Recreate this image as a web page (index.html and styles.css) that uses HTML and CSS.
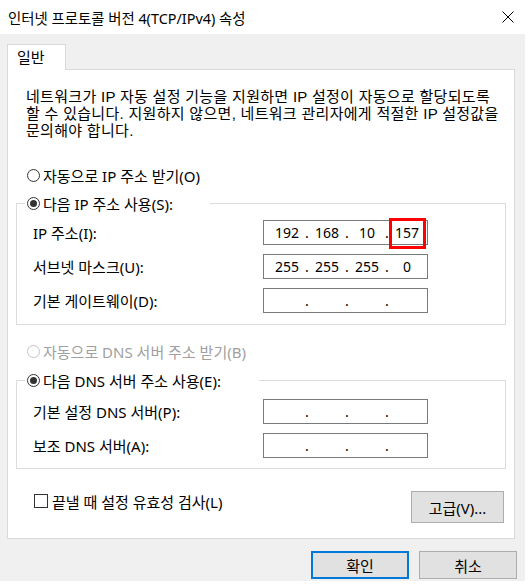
FILE: index.html
```html
<!DOCTYPE html>
<html lang="ko">
<head>
<meta charset="utf-8">
<title>인터넷 프로토콜 버전 4(TCP/IPv4) 속성</title>
<link rel="stylesheet" href="styles.css">
</head>
<body>
<div class="window">
  <div class="titlebar">
    <span class="title">인터넷 프로토콜 버전 4(TCP/IPv4) 속성</span>
    <svg class="close" width="12" height="12" viewBox="0 0 12 12"><path d="M0.5 0.5 L11.5 11.5 M11.5 0.5 L0.5 11.5" stroke="#000" stroke-width="1" fill="none"/></svg>
  </div>
  <div class="body">
    <div class="tabs"><div class="tab">일반</div></div>
    <div class="panel">
      <div class="desc">
        <div class="line">네트워크가 IP 자동 설정 기능을 지원하면 IP 설정이 자동으로 할당되도록</div>
        <div class="line">할 수 있습니다. 지원하지 않으면, 네트워크 관리자에게 적절한 IP 설정값을</div>
        <div class="line">문의해야 합니다.</div>
      </div>

      <div class="radio-row first"><span class="radio"></span><span>자동으로 IP 주소 받기(O)</span></div>

      <fieldset class="group">
        <legend class="legend ip-legend"><span class="radio checked"></span><span>다음 IP 주소 사용(S):</span></legend>
        <div class="rows ip-rows">
          <div class="field-row">
            <span>IP 주소(I):</span>
            <div class="ipbox"><span class="oct">192</span><span class="dot">.</span><span class="oct">168</span><span class="dot">.</span><span class="oct">10</span><span class="dot">.</span><span class="oct">157</span><span class="mark"></span></div>
          </div>
          <div class="field-row">
            <span>서브넷 마스크(U):</span>
            <div class="ipbox"><span class="oct">255</span><span class="dot">.</span><span class="oct">255</span><span class="dot">.</span><span class="oct">255</span><span class="dot">.</span><span class="oct">0</span></div>
          </div>
          <div class="field-row">
            <span>기본 게이트웨이(D):</span>
            <div class="ipbox"><span class="oct"></span><span class="dot">.</span><span class="oct"></span><span class="dot">.</span><span class="oct"></span><span class="dot">.</span><span class="oct"></span></div>
          </div>
        </div>
      </fieldset>

      <div class="radio-row disabled-row"><span class="radio disabled"></span><span>자동으로 DNS 서버 주소 받기(B)</span></div>

      <fieldset class="group dns-group">
        <legend class="legend dns-legend"><span class="radio checked"></span><span>다음 DNS 서버 주소 사용(E):</span></legend>
        <div class="rows dns-rows">
          <div class="field-row">
            <span>기본 설정 DNS 서버(P):</span>
            <div class="ipbox"><span class="oct"></span><span class="dot">.</span><span class="oct"></span><span class="dot">.</span><span class="oct"></span><span class="dot">.</span><span class="oct"></span></div>
          </div>
          <div class="field-row">
            <span>보조 DNS 서버(A):</span>
            <div class="ipbox"><span class="oct"></span><span class="dot">.</span><span class="oct"></span><span class="dot">.</span><span class="oct"></span><span class="dot">.</span><span class="oct"></span></div>
          </div>
        </div>
      </fieldset>

      <div class="bottom-row">
        <div class="check-row"><span class="checkbox"></span><span>끝낼 때 설정 유효성 검사(L)</span></div>
        <div class="btn adv">고급(V)...</div>
      </div>
    </div>
    <div class="actions">
      <div class="btn ok">확인</div>
      <div class="btn">취소</div>
    </div>
  </div>
</div>
</body>
</html>
```

FILE: styles.css
```css
* { box-sizing: border-box; }
html, body { margin: 0; padding: 0; background: #fff; }
body {
  font-family: "Noto Sans", "Noto Sans CJK KR", sans-serif;
  font-size: 15px;
  color: #000;
}
.window {
  width: 525px;
  height: 581px;
  background: #f0f0f0;
  display: flex;
  flex-direction: column;
}
.titlebar {
  height: 34px;
  background: #fff;
  display: flex;
  align-items: center;
  justify-content: space-between;
  padding-left: 8px;
  font-size: 14.4px;
}
.close { margin-right: 11px; display: block; }
.body {
  padding: 10px 8px 0 7px;
  display: flex;
  flex-direction: column;
}
.tabs { display: flex; height: 26px; margin-bottom: -1px; }
.tab {
  position: relative;
  z-index: 1;
  width: 59px;
  height: 26px;
  border: 1px solid #d9d9d9;
  border-bottom: none;
  background: #fff;
  padding-left: 9px;
  line-height: 25px;
}
.panel {
  width: 508px;
  height: 470px;
  background: #fff;
  border: 1px solid #d9d9d9;
  display: flex;
  flex-direction: column;
}
.desc {
  margin: 18px 0 0 18px;
  font-family: "Liberation Sans", "Noto Sans CJK KR", sans-serif;
  letter-spacing: 0.3px;
  white-space: nowrap;
}
.line { height: 17px; line-height: 17px; }
.radio-row {
  display: flex;
  align-items: center;
  height: 20px;
  margin-left: 19px;
  gap: 3px;
}
.radio-row.first { margin-top: 26px; }
.radio {
  width: 13px;
  height: 13px;
  border: 1px solid #333;
  border-radius: 50%;
  background: #fff;
  display: flex;
  align-items: center;
  justify-content: center;
  flex: none;
}
.radio.checked::after {
  content: "";
  width: 7px;
  height: 7px;
  border-radius: 50%;
  background: #333;
}
.radio.disabled { border-color: #c4c4c4; }
.disabled-row { color: #a0a0a0; margin-top: 16px; }
.group {
  margin: 8px 8px 0 8px;
  border: 1px solid #dcdcdc;
  padding: 0;
  min-width: 0;
}
.dns-group { margin-top: 9px; }
.legend {
  display: flex;
  align-items: center;
  gap: 3px;
  height: 20px;
  margin-left: 8px;
  padding: 0 2px;
  background: #fff;
}
.ip-legend { width: 185px; }
.dns-legend { width: 234px; }
.rows {
  display: flex;
  flex-direction: column;
  gap: 9px;
  padding: 7px 0 11px 16px;
}
.dns-rows { padding: 9px 0 10px 16px; }
.field-row {
  display: grid;
  grid-template-columns: 230px 165px;
  align-items: center;
  height: 25px;
}
.ipbox {
  position: relative;
  width: 165px;
  height: 25px;
  border: 1px solid #7a7a7a;
  background: #fff;
  display: flex;
  align-items: center;
  padding-left: 7px;
  font-size: 14px;
}
.oct { width: 32px; text-align: center; }
.dot { width: 8px; text-align: center; }
.mark {
  position: absolute;
  left: 125px;
  top: -3px;
  width: 37px;
  height: 31px;
  border: 3px solid #f00;
}
.bottom-row {
  display: flex;
  justify-content: space-between;
  align-items: flex-start;
  margin: 22px 10px 0 26px;
}
.check-row {
  display: flex;
  align-items: center;
  height: 20px;
  gap: 4px;
}
.checkbox {
  width: 14px;
  height: 14px;
  border: 1px solid #333;
  background: #fff;
  flex: none;
}
.btn {
  height: 28px;
  width: 98px;
  background: #e1e1e1;
  border: 1px solid #adadad;
  display: flex;
  align-items: center;
  justify-content: center;
}
.btn.adv { width: 93px; height: 32px; }
.btn.ok { border: 2px solid #0078d7; }
.actions {
  display: flex;
  justify-content: flex-end;
  gap: 10px;
  margin-top: 12px;
}
```
